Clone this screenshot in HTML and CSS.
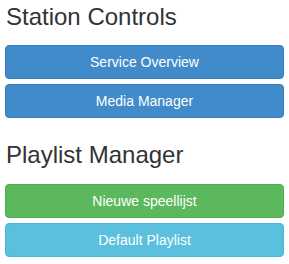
FILE: index.html
```html
<!DOCTYPE html>
<html>
<head>
  <meta charset="UTF-8">
  <title>Station</title>
  <link rel="stylesheet" href="styles.css">
</head>
<body>
  <div class="container">
    <div class="section">
      <h3>Station Controls</h3>
      <div class="button-list">
        <button class="btn btn-primary">Service Overview</button>
        <button class="btn btn-primary">Media Manager</button>
      </div>
    </div>
    <div class="section">
      <h3>Playlist Manager</h3>
      <div class="button-list">
        <button class="btn btn-success">Nieuwe speellijst</button>
        <button class="btn btn-info">Default Playlist</button>
      </div>
    </div>
  </div>
</body>
</html>
```

FILE: styles.css
```css
body {
  margin: 0;
  font-family: "Liberation Sans", Arial, sans-serif;
  font-size: 14px;
  color: #333;
  background-color: #fff;
}

.container {
  padding: 4px 5px 0;
}

.section {
  margin-bottom: 24px;
}

.section:last-child {
  margin-bottom: 0;
}

h3 {
  font-size: 24px;
  font-weight: normal;
  line-height: 1.1;
  margin: 0 0 15px;
  padding-left: 1px;
}

.button-list {
  display: flex;
  flex-direction: column;
  gap: 5px;
}

.btn {
  display: block;
  width: 100%;
  height: 34px;
  padding: 6px 12px;
  font-family: inherit;
  font-size: 14px;
  line-height: 20px;
  color: #fff;
  text-align: center;
  border: 1px solid transparent;
  border-radius: 4px;
  cursor: pointer;
}

.btn-primary {
  background-color: #428bca;
  border-color: #357ebd;
}

.btn-success {
  background-color: #5cb85c;
  border-color: #4cae4c;
}

.btn-info {
  background-color: #5bc0de;
  border-color: #46b8da;
}
```
